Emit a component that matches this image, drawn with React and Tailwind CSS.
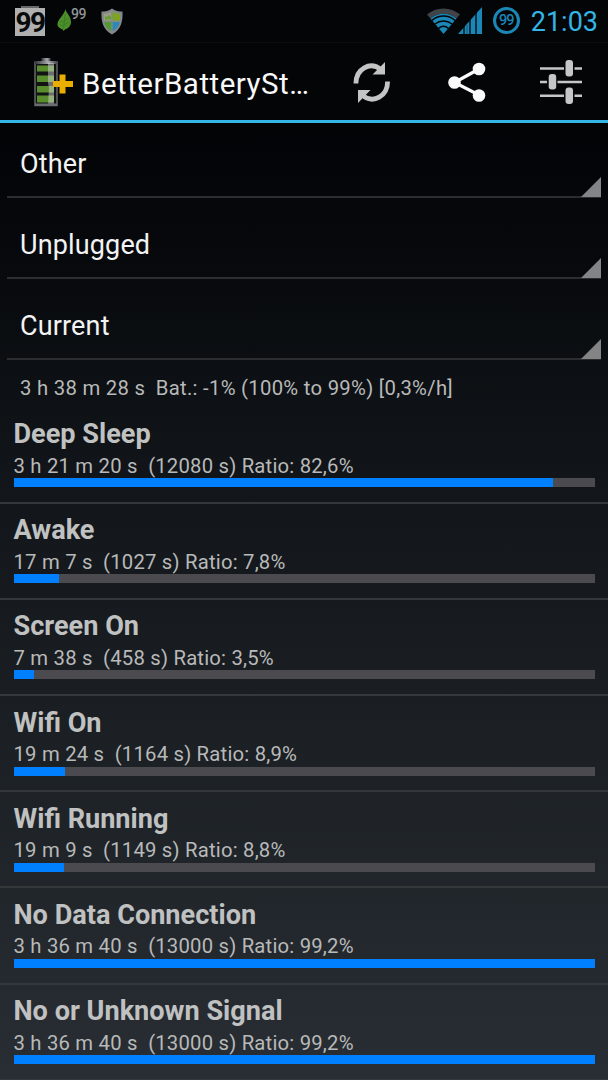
import React from 'react';

const spinners = ['Other', 'Unplugged', 'Current'];

const stats = [
  { name: 'Deep Sleep', value: '3 h 21 m 20 s  (12080 s) Ratio: 82,6%', fill: 92.9 },
  { name: 'Awake', value: '17 m 7 s  (1027 s) Ratio: 7,8%', fill: 7.9 },
  { name: 'Screen On', value: '7 m 38 s  (458 s) Ratio: 3,5%', fill: 3.5 },
  { name: 'Wifi On', value: '19 m 24 s  (1164 s) Ratio: 8,9%', fill: 8.9 },
  { name: 'Wifi Running', value: '19 m 9 s  (1149 s) Ratio: 8,8%', fill: 8.7 },
  { name: 'No Data Connection', value: '3 h 36 m 40 s  (13000 s) Ratio: 99,2%', fill: 100 },
  { name: 'No or Unknown Signal', value: '3 h 36 m 40 s  (13000 s) Ratio: 99,2%', fill: 100 },
];

const LeafIcon = () => (
  <svg className="w-[15px] h-[24px]" viewBox="0 0 15 24">
    <path d="M8.500 0C9 4 14 7 14 13c0 4-3 6.500-6 7.500L6.500 22l-.8-1.500C2 19 0 17.500.5 14.500 1.500 9.500 7 6 8.500 0z" fill="#4d8f2b" />
    <path d="M8 5L6.500 20M7.500 12l4-3M7 16l5-3M7.200 13l-4-1M6.800 17l-4-1.500" stroke="#3a7722" strokeWidth=".8" fill="none" />
  </svg>
);

const ShieldIcon = () => (
  <svg className="w-[22px] h-[27px]" viewBox="0 0 22 27">
    <path d="M11 .5C14 3 18 3.500 21.500 3.500 22 14 20 21.500 11 26.500 2 21.500 0 14 .5 3.500 4 3.500 8 3 11 .5z" fill="#85888a" />
    <path d="M10.300 4C8 5.300 6 5.700 3 5.800V12.500h7.300z" fill="#9b9c80" />
    <path d="M4 8l2 1 2-2 2 2v2.500H4z" fill="#659f2d" />
    <path d="M11.700 4c2.300 1.300 4.300 1.700 7.300 1.800v6.700h-7.300z" fill="#7ba51e" />
    <path d="M3.200 14h7.100v9.300C6 20.800 4 18 3.200 14z" fill="#4f9a35" />
    <path d="M18.800 14h-7.100v9.300c4.300-2.500 6.300-5.300 7.100-9.300z" fill="#2c88b5" />
  </svg>
);

const WifiIcon = () => (
  <svg className="w-[33px] h-[26px]" viewBox="0 0 33 26">
    <path d="M0 6.500C9-1.500 24-1.500 33 6.500L29.500 10.500C22 4 11 4 3.500 10.500z" fill="#414446" />
    <path d="M3.500 10.500C11 4 22 4 29.500 10.500L16.500 26z" fill="#1b87b7" />
    <g stroke="#030507" strokeWidth="1.500" fill="none">
      <path d="M5 12.300c7-5.700 16-5.700 23 0" />
      <path d="M8 16c5-4 12-4 17 0" />
      <path d="M11.500 20.300c3-2.500 7-2.500 10 0" />
    </g>
  </svg>
);

const SignalIcon = () => (
  <svg className="w-[24px] h-[27px]" viewBox="0 0 24 27">
    <path d="M0 27L24 0v27z" fill="#1b87b7" />
    <path d="M6 18v9M12 11v16M18 5v22" stroke="#030507" strokeWidth="1.300" />
    <path d="M9 18v9" stroke="#10506c" strokeWidth=".8" />
  </svg>
);

const BatteryIcon = () => (
  <svg className="w-[39px] h-[50px]" viewBox="0 0 39 50">
    <defs>
      <linearGradient id="cap" x1="0" x2="1" y1="0" y2="0">
        <stop offset="0" stopColor="#333438" />
        <stop offset=".6" stopColor="#aaaaae" />
        <stop offset="1" stopColor="#444549" />
      </linearGradient>
    </defs>
    <path d="M7.500 1h9v4h-9z" fill="url(#cap)" />
    <path d="M1 5h22v43.500H1z" fill="#111315" stroke="#66676c" strokeWidth="1.500" />
    <path d="M1 4h22v3H1z" fill="url(#cap)" />
    <path d="M3 8.500h17v6H3zM3 18.500h17v6.500H3zM3 29h17v6.500H3zM3 38.500h17v7H3z" fill="#588c2c" />
    <path d="M14 6h6v42h-6l1-17-1-5z" fill="#dedee3" opacity=".45" />
    <path d="M1 46.500h22v2H1z" fill="#6c6d72" />
    <path d="M25.500 17.500h6v6.500h7.500v6h-7.500v6.500h-6V30H19v-6h6.500z" fill="#eaae00" />
  </svg>
);

const RefreshIcon = () => (
  <svg className="w-[40px] h-[44px]" viewBox="0 0 40 44">
    <g fill="none" stroke="#c4c4c4" strokeWidth="4.800">
      <path d="M3.900 23.500C3.900 9 18 .8 28.800 9.500" />
      <path d="M35.600 21.500c0 14.500-14.100 22.700-24.900 14" />
    </g>
    <path d="M33 2v12.500H20.500zM6 43V30h12.500z" fill="#c4c4c4" />
  </svg>
);

const ShareIcon = () => (
  <svg className="w-[38px] h-[40px]" viewBox="0 0 38 40">
    <path d="M31 7L6.500 20.500 31 33" stroke="#fafafa" strokeWidth="3.200" fill="none" />
    <circle cx="31" cy="7" r="6.300" fill="#fafafa" />
    <circle cx="6.500" cy="20.500" r="6.300" fill="#fafafa" />
    <circle cx="31" cy="33.500" r="6.300" fill="#fafafa" />
  </svg>
);

const SlidersIcon = () => (
  <svg className="w-[42px] h-[44px]" viewBox="0 0 42 44">
    <path d="M0 8.500h24M34.500 8.500h7.500M0 22h7M17.500 22H42M0 35.700h24M34.500 35.700h7.500" stroke="#c6c6c6" strokeWidth="2.500" />
    <rect x="25.500" y="0" width="7.500" height="16.500" rx="3" fill="#c6c6c6" />
    <rect x="8.700" y="14" width="7.500" height="15.500" rx="3" fill="#c6c6c6" />
    <rect x="25.500" y="27.500" width="7.500" height="16.500" rx="3" fill="#c6c6c6" />
  </svg>
);

const StatusBar = () => (
  <div className="flex h-[43px] items-start bg-[#030507] border-b border-[#0b0d0f]">
    <div className="flex items-start pt-[6px] pl-[15px]">
      <div className="flex flex-col items-center">
        <div className="h-[2px] w-[18px] bg-[#66686a]"></div>
        <div className="flex h-[28px] w-[30px] items-center justify-center bg-[#b0b0b0] pt-px text-[28px] font-bold tracking-[-1.500px] text-[#08090a]">99</div>
      </div>
      <div className="ml-[12px] mt-[3px]"><LeafIcon /></div>
      <div className="-ml-px mt-[1px] text-[14px] font-medium leading-[15px] tracking-[-0.500px] text-[#929496]">99</div>
      <div className="ml-[15px] mt-[2px]"><ShieldIcon /></div>
    </div>
    <div className="ml-auto flex items-start pr-[10px] pt-[7px]">
      <div className="mt-[1px]"><WifiIcon /></div>
      <div className="-ml-[2px]"><SignalIcon /></div>
      <div className="ml-[11px] flex size-[27px] items-center justify-center rounded-full border-[3.500px] border-[#1b87b7] pt-px text-[14.500px] font-medium tracking-[-1px] text-[#1b87b7]">99</div>
      <div className="ml-[11px] text-[27px] leading-[31px] text-[#33b5e5]">21:03</div>
    </div>
  </div>
);

const ActionBar = () => (
  <div className="flex h-[80px] items-center border-b-[3px] border-[#33b5e5] bg-[#030507] pl-[34px] pr-[26px]">
    <BatteryIcon />
    <h1 className="ml-[9px] w-[230px] whitespace-nowrap pt-[5px] text-[29.500px] leading-[34px] tracking-[0.500px] text-[#f8f8f8]">BetterBatterySt…</h1>
    <div className="ml-auto flex items-center">
      <RefreshIcon />
      <div className="ml-[56px]"><ShareIcon /></div>
      <div className="ml-[54px]"><SlidersIcon /></div>
    </div>
  </div>
);

const Spinner = ({ label }) => (
  <div className="relative mx-[7px] mb-[7px] flex h-[74px] items-center border-b-2 border-[#2b2d31] pl-[13px] pt-[8px] text-[27px] tracking-[0.150px] text-[#f3f3f3]">
    {label}
    <svg className="absolute -bottom-px right-0 size-[20px]" viewBox="0 0 20 20">
      <path d="M20 0v20H0z" fill="#838485" />
    </svg>
  </div>
);

const StatRow = ({ name, value, fill }) => (
  <div className="h-[96.200px] border-b-2 border-[#34383b] px-[13.500px] pt-[10.500px]">
    <h2 className="text-[27.100px] font-bold leading-[32px] text-[#c0c1c1]">{name}</h2>
    <p className="whitespace-pre pt-[1.500px] text-[20.300px] leading-[28px] tracking-[0.200px] text-[#b8b9b9]">{value}</p>
    <div className="-mt-[1.500px] h-[9px] bg-[#4b4a4f]">
      <div className="h-full bg-[#0080ff]" style={{ width: `${fill}%` }}></div>
    </div>
  </div>
);

const App = () => {
  return (
    <div className="h-[1080px] w-[608px] overflow-hidden bg-linear-to-b from-[#030406] from-12% via-[#12161a] via-45% to-[#292e34] font-['Roboto',sans-serif]">
      <StatusBar />
      <ActionBar />

      {/* Stat type and reference selectors */}
      <div className="pt-px">
        {spinners.map((label) => (
          <Spinner key={label} label={label} />
        ))}
      </div>

      <p className="h-[40.500px] whitespace-pre pl-[20px] pt-[7px] text-[20.300px] leading-[28px] tracking-[0.280px] text-[#b8b9b9]">3 h 38 m 28 s  Bat.: -1% (100% to 99%) [0,3%/h]</p>

      {/* Statistics list */}
      <div>
        {stats.map((stat) => (
          <StatRow key={stat.name} {...stat} />
        ))}
      </div>
    </div>
  );
};

export default App;
